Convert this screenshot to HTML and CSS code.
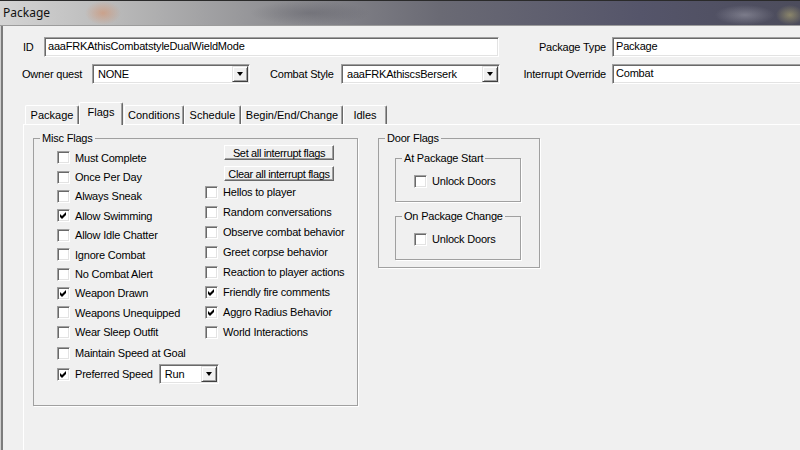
FILE: index.html
```html
<!DOCTYPE html>
<html lang="en">

<head>
  <meta charset="UTF-8" />
  <meta name="viewport" content="width=device-width, initial-scale=1.0" />
  <title>Package</title>
  <link rel="stylesheet" href="styles.css">
</head>

<body>
  <div class="window">
    <div class="titlebar">Package</div>
    <div class="frame">
      <div class="client">
        <div class="row row-id">
          <label class="lbl lbl-id">ID</label>
          <div class="edit w-id">aaaFRKAthisCombatstyleDualWieldMode</div>
          <label class="lbl lbl-right">Package Type</label>
          <div class="edit w-side">Package</div>
        </div>
        <div class="row row-owner">
          <label class="lbl lbl-owner">Owner quest</label>
          <div class="combo w-owner"><span class="combo-text">NONE</span><span class="drop"></span></div>
          <label class="lbl lbl-style">Combat Style</label>
          <div class="combo w-style"><span class="combo-text">aaaFRKAthiscsBerserk</span><span class="drop"></span></div>
          <label class="lbl lbl-right lbl-right2">Interrupt Override</label>
          <div class="edit w-side">Combat</div>
        </div>

        <div class="tabs">
          <div class="tab t-package">Package</div>
          <div class="tab t-flags active">Flags</div>
          <div class="tab t-cond">Conditions</div>
          <div class="tab t-sched">Schedule</div>
          <div class="tab t-begin">Begin/End/Change</div>
          <div class="tab t-idles">Idles</div>
        </div>

        <div class="panel">
          <fieldset class="group misc">
            <legend>Misc Flags</legend>
            <div class="misc-cols">
              <div class="col-left">
                <div class="cb"><span class="cb-box"></span>Must Complete</div>
                <div class="cb"><span class="cb-box"></span>Once Per Day</div>
                <div class="cb"><span class="cb-box"></span>Always Sneak</div>
                <div class="cb"><span class="cb-box on"><svg viewBox="0 0 11 11"><polygon points="2,4 4,6 8,2 8,5 4,9 2,7" /></svg></span>Allow Swimming</div>
                <div class="cb"><span class="cb-box"></span>Allow Idle Chatter</div>
                <div class="cb"><span class="cb-box"></span>Ignore Combat</div>
                <div class="cb"><span class="cb-box"></span>No Combat Alert</div>
                <div class="cb"><span class="cb-box on"><svg viewBox="0 0 11 11"><polygon points="2,4 4,6 8,2 8,5 4,9 2,7" /></svg></span>Weapon Drawn</div>
                <div class="cb"><span class="cb-box"></span>Weapons Unequipped</div>
                <div class="cb"><span class="cb-box"></span>Wear Sleep Outfit</div>
                <div class="cb cb-maintain"><span class="cb-box"></span>Maintain Speed at Goal</div>
                <div class="cb cb-speed"><span class="cb-box on"><svg viewBox="0 0 11 11"><polygon points="2,4 4,6 8,2 8,5 4,9 2,7" /></svg></span>Preferred Speed
                  <div class="combo w-speed"><span class="combo-text">Run</span><span class="drop"></span></div>
                </div>
              </div>
              <div class="col-right">
                <button class="btn">Set all interrupt flags</button>
                <button class="btn btn-clear">Clear all interrupt flags</button>
                <div class="right-checks">
                  <div class="cb"><span class="cb-box"></span>Hellos to player</div>
                  <div class="cb"><span class="cb-box"></span>Random conversations</div>
                  <div class="cb"><span class="cb-box"></span>Observe combat behavior</div>
                  <div class="cb"><span class="cb-box"></span>Greet corpse behavior</div>
                  <div class="cb"><span class="cb-box"></span>Reaction to player actions</div>
                  <div class="cb"><span class="cb-box on"><svg viewBox="0 0 11 11"><polygon points="2,4 4,6 8,2 8,5 4,9 2,7" /></svg></span>Friendly fire comments</div>
                  <div class="cb"><span class="cb-box on"><svg viewBox="0 0 11 11"><polygon points="2,4 4,6 8,2 8,5 4,9 2,7" /></svg></span>Aggro Radius Behavior</div>
                  <div class="cb"><span class="cb-box"></span>World Interactions</div>
                </div>
              </div>
            </div>
          </fieldset>

          <fieldset class="group door">
            <legend>Door Flags</legend>
            <fieldset class="group sub sub-start">
              <legend>At Package Start</legend>
              <div class="cb"><span class="cb-box"></span>Unlock Doors</div>
            </fieldset>
            <fieldset class="group sub sub-change">
              <legend>On Package Change</legend>
              <div class="cb"><span class="cb-box"></span>Unlock Doors</div>
            </fieldset>
          </fieldset>
        </div>
      </div>
    </div>
  </div>
</body>

</html>
```

FILE: styles.css
```css
:root {
  --face: #f0f0f0;
  --shadow: #a0a0a0;
  --dark: #696969;
  --light: #e3e3e3;
}

* {
  box-sizing: border-box;
}

html,
body {
  margin: 0;
  height: 100%;
}

body {
  background: var(--face);
  font-family: "Liberation Sans", Arial, sans-serif;
  font-size: 11px;
  letter-spacing: -0.2px;
  color: #000;
  overflow: hidden;
}

.window {
  display: flex;
  flex-direction: column;
  width: 800px;
  height: 450px;
}

/* glass caption */
.titlebar {
  height: 26px;
  padding-left: 3px;
  line-height: 23px;
  font-family: "Noto Sans", sans-serif;
  font-size: 12px;
  letter-spacing: 0;
  color: #111;
  border-top: 1px solid #2a2a2a;
  border-bottom: 1px solid #9c9c9c;
  background:
    radial-gradient(ellipse 18px 12px at 103px 12px, rgba(214, 140, 100, 0.55), transparent),
    radial-gradient(ellipse 30px 10px at 745px 14px, rgba(190, 190, 200, 0.4), transparent),
    radial-gradient(ellipse 14px 10px at 790px 14px, rgba(200, 190, 120, 0.5), transparent),
    radial-gradient(ellipse 60px 12px at 310px 12px, rgba(80, 80, 90, 0.35), transparent),
    linear-gradient(90deg, #d4d4d4 0%, #b8b8b8 15%, #8e8e92 35%, #6a6a74 55%, #55556a 80%, #4c4c5c 100%);
}

.frame {
  flex: 1;
  display: flex;
  border-left: 1px solid #cfcfcf;
}

.client {
  flex: 1;
  display: flex;
  flex-direction: column;
  border-left: 2px solid #7c7c7c;
  padding: 11px 0 0 19px;
  overflow: hidden;
}

.row {
  display: flex;
  align-items: center;
  height: 20px;
  white-space: nowrap;
}

.row-owner {
  margin-top: 7px;
}

.lbl {
  flex: none;
}

.lbl-id {
  width: 22px;
  padding-left: 1px;
}

.lbl-owner {
  width: 70px;
}

.lbl-style {
  width: 71px;
  margin-left: 20px;
}

.lbl-right {
  width: 113px;
  padding-right: 6px;
  text-align: right;
}

.lbl-right2 {
  width: 112px;
}

/* sunken edit / combo boxes */
.edit,
.combo {
  flex: none;
  height: 20px;
  background: #fff;
  border: 1px solid;
  border-color: var(--shadow) #fff #fff var(--shadow);
  box-shadow: inset 1px 1px 0 var(--dark), inset -1px -1px 0 var(--light);
  line-height: 17px;
  padding-left: 3px;
}

.w-id {
  width: 455px;
}

.w-side {
  width: 210px;
}

.combo {
  display: flex;
  justify-content: space-between;
  padding: 1px 1px 1px 5px;
  line-height: 15px;
}

.w-owner {
  width: 158px;
}

.w-style {
  width: 159px;
}

.w-speed {
  width: 60px;
  margin-left: 6px;
}

.combo-text {
  padding-top: 1px;
}

.drop {
  position: relative;
  width: 16px;
  height: 16px;
  background: var(--face);
  border: 1px solid;
  border-color: var(--light) #404040 #404040 var(--light);
  box-shadow: inset 1px 1px 0 #fff, inset -1px -1px 0 var(--shadow);
}

/* small arrow on the drop button */
.drop::after {
  content: "";
  position: absolute;
  left: 4px;
  top: 5px;
  border-left: 3.5px solid transparent;
  border-right: 3.5px solid transparent;
  border-top: 4px solid #000;
}

/* tab strip */
.tabs {
  display: flex;
  align-items: flex-end;
  height: 23px;
  margin: 17px 0 0 3px;
  letter-spacing: 0;
}

.tab {
  height: 19px;
  padding-top: 3px;
  text-align: center;
  background: var(--face);
  border-top: 1px solid #fff;
  border-left: 1px solid #fff;
  border-right: 1px solid var(--dark);
  border-radius: 2px 2px 0 0;
  box-shadow: inset -1px 0 0 var(--shadow);
}

.tab.active {
  position: relative;
  z-index: 1;
  height: 23px;
  margin-bottom: -1px;
  padding-top: 3px;
}

.t-package {
  width: 54px;
}

.t-flags {
  width: 44px;
}

.t-cond {
  width: 60px;
  margin-left: 1px;
}

.t-sched {
  width: 57px;
}

.t-begin {
  width: 102px;
}

.t-idles {
  width: 44px;
}

.panel {
  flex: 1;
  display: flex;
  align-items: flex-start;
  gap: 20px;
  margin-left: 1px;
  padding: 7px 0 0 9px;
  border-top: 1px solid #fff;
  border-left: 1px solid #fff;
}

/* etched group boxes */
.group {
  margin: 0;
  min-width: 0;
  border: 1px solid var(--shadow);
  box-shadow: 1px 1px 0 #fff;
  padding: 0;
}

.group legend {
  padding: 0 2px;
  line-height: 13px;
  white-space: nowrap;
}

.misc {
  width: 325px;
  height: 274px;
  padding-left: 23px;
}

.misc > legend {
  margin-left: -17px;
}

.misc-cols {
  display: flex;
}

.col-left {
  width: 148px;
  padding-top: 3px;
}

.cb {
  display: flex;
  align-items: center;
  height: 19.4px;
  white-space: nowrap;
}

.cb-box {
  flex: none;
  width: 13px;
  height: 13px;
  margin-right: 5px;
  background: #fff;
  border: 1px solid;
  border-color: var(--shadow) #fff #fff var(--shadow);
  box-shadow: inset 1px 1px 0 var(--dark), inset -1px -1px 0 var(--light);
}

.cb-box svg {
  display: block;
  width: 11px;
  height: 11px;
  fill: #000;
}

.cb-maintain {
  margin-top: 1.5px;
}

.cb-speed {
  height: 23px;
}

.col-right {
  display: flex;
  flex-direction: column;
  align-items: flex-start;
}

.btn {
  display: flex;
  align-items: center;
  justify-content: center;
  margin: 0 0 0 19px;
  width: 110px;
  height: 15px;
  padding: 0;
  font: inherit;
  letter-spacing: -0.35px;
  line-height: 12px;
  white-space: nowrap;
  color: #000;
  background: var(--face);
  border: 1px solid;
  border-color: #fff var(--dark) var(--dark) #fff;
  box-shadow: inset -1px -1px 0 var(--shadow);
}

.btn-clear {
  margin-top: 6px;
}

.right-checks {
  margin-top: 1px;
}

.right-checks .cb {
  height: 20px;
}

.door {
  width: 162px;
  height: 136px;
  padding: 7px 0 0 16px;
}

.door > legend {
  margin-left: -10px;
}

.sub {
  width: 126px;
  height: 50px;
  padding: 6px 0 0 18px;
}

.sub > legend {
  margin-left: -12px;
}

.sub-change {
  margin-top: 8px;
}

.sub .cb {
  height: 20px;
}
```
